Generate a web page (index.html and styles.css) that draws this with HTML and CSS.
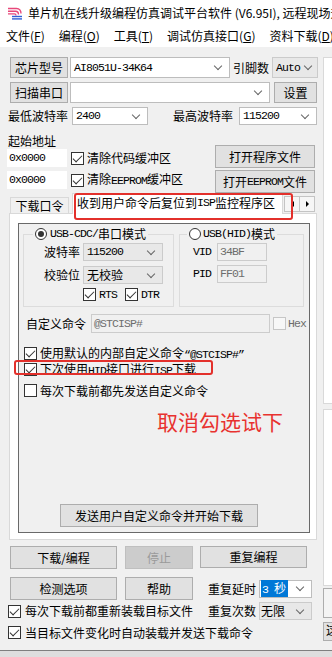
FILE: index.html
```html
<!DOCTYPE html>
<html>
  <head>
    <meta charset="utf-8">
    <title>STC-ISP</title>
    <link rel="stylesheet" href="styles.css">
  </head>
  <body>
    <div class="titlebar">
      <svg class="logo" viewBox="0 0 16 14">
        <path d="M1 2.5h8.5c3 0 4.5 2 4.5 5"/>
        <path d="M1 5.2h7.5c2 0 3 1.3 3 3.3"/>
        <path d="M1 7.9h6.5c1 0 1.5 .6 1.5 1.6"/>
        <rect x="5" y="9.8" width="10" height="1.4"/>
        <rect x="5" y="12.2" width="10" height="1.4"/>
      </svg>
      <span class="title">单片机在线升级编程仿真调试平台软件 (V6.95I), 远程现场升级</span>
    </div>
    <div class="menubar">
      <span>文件(<u>F</u>)</span>
      <span>编程(<u>O</u>)</span>
      <span>工具(<u>T</u>)</span>
      <span>调试仿真接口(<u>G</u>)</span>
      <span>资料下载(<u>D</u>)</span>
    </div>

    <div class="client">
      <div class="main">
        <div class="row r1">
          <div class="btn b-lbl">芯片型号</div>
          <div class="combo c-chip"><span class="m">AI8051U-34K64</span></div>
          <span class="pinlbl">引脚数</span>
          <div class="combo grey c-pin"><span class="m">Auto</span></div>
        </div>
        <div class="row r2">
          <div class="btn b-lbl">扫描串口</div>
          <div class="combo c-port"></div>
          <div class="btn b-set">设置</div>
        </div>
        <div class="row r3">
          <span>最低波特率</span>
          <div class="combo c-min"><span class="m">2400</span></div>
          <span class="maxlbl">最高波特率</span>
          <div class="combo c-max"><span class="m">115200</span></div>
        </div>

        <div class="addr">
          <div class="addr-left">
            <div class="addr-title">起始地址</div>
            <div class="row addr-row">
              <div class="edit"><span class="m">0x0000</span></div>
              <span class="cb on"></span><span class="cbtext">清除代码缓冲区</span>
            </div>
            <div class="row addr-row">
              <div class="edit"><span class="m">0x0000</span></div>
              <span class="cb on"></span><span class="cbtext">清除<span class="m">EEPROM</span>缓冲区</span>
            </div>
          </div>
          <div class="addr-right">
            <div class="btn b-open">打开程序文件</div>
            <div class="btn b-open">打开<span class="m">EEPROM</span>文件</div>
          </div>
        </div>

        <div class="tabs">
          <div class="tab">下载口令</div>
          <div class="tab active">收到用户命令后复位到<span class="m">ISP</span>监控程序区</div>
          <div class="tabarrows"><span class="arr l"></span><span class="arr r"></span></div>
          <div class="mark mark-tab"></div>
        </div>

        <div class="panel">
          <div class="inner">
            <div class="groups">
              <fieldset class="grp cdc">
                <legend><span class="radio on"></span><span class="m">USB-CDC/</span>串口模式</legend>
                <div class="frow">
                  <span class="flbl">波特率</span>
                  <div class="combo grey c-baud"><span class="m">115200</span></div>
                </div>
                <div class="frow frow2">
                  <span class="flbl">校验位</span>
                  <div class="combo grey c-baud">无校验</div>
                </div>
                <div class="cbrow">
                  <span class="cb on"></span><span class="m cbm">RTS</span>
                  <span class="cb on cb-dtr"></span><span class="m cbm">DTR</span>
                </div>
              </fieldset>
              <fieldset class="grp hid">
                <legend><span class="radio"></span><span class="m">USB(HID)</span>模式</legend>
                <div class="frow hrow">
                  <span class="m">VID</span>
                  <div class="edit dis e-id"><span class="m">34BF</span></div>
                </div>
                <div class="frow hrow hrow2">
                  <span class="m">PID</span>
                  <div class="edit dis e-id"><span class="m">FF01</span></div>
                </div>
              </fieldset>
            </div>

            <div class="row cmdrow">
              <span class="cmdlbl">自定义命令</span>
              <div class="edit dis e-cmd"><span class="m">@STCISP#</span></div>
              <span class="cb dis"></span><span class="m hex">Hex</span>
            </div>

            <div class="opt opt1"><span class="cb on"></span><span class="cbtext">使用默认的内部自定义命令<span class="m">“@STCISP#”</span></span></div>
            <div class="opt opt2">
              <span class="cb on"></span><span class="cbtext">下次使用<span class="m">HID</span>接口进行<span class="m">ISP</span>下载</span>
              <div class="mark mark-opt"></div>
            </div>
            <div class="opt opt3"><span class="cb"></span><span class="cbtext">每次下载前都先发送自定义命令</span></div>

            <div class="note">取消勾选试下</div>

            <div class="btn b-send">发送用户自定义命令并开始下载</div>
          </div>
        </div>

        <div class="row brow1">
          <div class="btn b-big">下载/编程</div>
          <div class="btn b-mid off">停止</div>
          <div class="btn b-big b-rep">重复编程</div>
        </div>
        <div class="row brow2">
          <div class="btn b-big">检测选项</div>
          <div class="btn b-mid">帮助</div>
          <span class="replbl">重复延时</span>
          <div class="combo c-rep"><span class="sel"><span class="m">3 </span>秒</span></div>
        </div>
        <div class="row brow3">
          <div class="row bopt"><span class="cb on"></span><span class="cbtext">每次下载前都重新装载目标文件</span></div>
          <span class="replbl2">重复次数</span>
          <div class="combo grey c-rep">无限</div>
        </div>
        <div class="row brow4">
          <span class="cb on"></span><span class="cbtext">当目标文件变化时自动装载并发送下载命令</span>
        </div>
      </div>

      <div class="side">
        <div class="sbox s1"></div>
        <div class="sbox s2"></div>
        <div class="sbtn s3"></div>
        <div class="sbtn s4">这</div>
      </div>
    </div>
  </body>
</html>
```

FILE: styles.css
```css
* {
  box-sizing: border-box;
}

body {
  margin: 0;
  background: #dedede;
  font-family: "Noto Sans CJK SC", sans-serif;
  font-size: 12px;
  line-height: 14px;
  color: #000;
  overflow: hidden;
}

/* narrow latin text (SimSun look) */
.m {
  font-family: "Liberation Mono", monospace;
  font-size: 11.5px;
  letter-spacing: -0.9px;
}

.row {
  display: flex;
  align-items: center;
}
.row > span,
.frow > span {
  flex: none;
  white-space: nowrap;
}

/* title + menu */
.titlebar {
  height: 25px;
  background: #fff;
  display: flex;
  align-items: center;
  padding-left: 7px;
  white-space: nowrap;
  overflow: hidden;
}
.logo {
  width: 16px;
  height: 14px;
  flex: none;
}
.logo path {
  fill: none;
  stroke: #e8477a;
  stroke-width: 1.4;
}
.logo rect {
  fill: #3160d6;
}
.title {
  margin-left: 5px;
}

.menubar {
  height: 22px;
  background: #fff;
  display: flex;
  align-items: center;
  gap: 14px;
  padding-left: 6px;
  white-space: nowrap;
  overflow: hidden;
}
.menubar span {
  flex: none;
}

.client {
  display: flex;
  height: 604px;
  background: #f0f0f0;
  border-bottom: 1px solid #7f7f7f;
}
.main {
  width: 323px;
  flex: none;
  padding-top: 10px;
}

/* controls */
.btn {
  display: flex;
  align-items: center;
  justify-content: center;
  background: #e1e1e1;
  border: 1px solid #adadad;
  flex: none;
  white-space: nowrap;
}
.btn.off {
  background: #cccccc;
  border-color: #bfbfbf;
  color: #9a9a9a;
}

.combo {
  display: flex;
  align-items: center;
  background: #fff;
  border: 1px solid #bdbdbd;
  padding-left: 3px;
  flex: none;
  white-space: nowrap;
}
.combo::after {
  content: "";
  width: 5px;
  height: 5px;
  border-right: 1px solid #666;
  border-bottom: 1px solid #666;
  transform: rotate(45deg);
  margin: -3px 8px 0 auto;
  flex: none;
}
.combo.grey {
  background: #e8e8e8;
  border-color: #cbcbcb;
}

.edit {
  display: flex;
  align-items: center;
  background: #fff;
  padding-left: 2px;
  flex: none;
  white-space: nowrap;
}
.edit.dis {
  background: #f0f0f0;
  border: 1px solid #cccccc;
  color: #6d6d6d;
}

.cb {
  width: 13px;
  height: 13px;
  border: 1px solid #333;
  background: #fff;
  flex: none;
  display: flex;
  align-items: center;
  justify-content: center;
}
.cb.on::after {
  content: "";
  width: 4px;
  height: 8px;
  border-right: 1px solid #333;
  border-bottom: 1px solid #333;
  transform: rotate(45deg);
  margin-top: -2px;
}
.cb.dis {
  border-color: #c6c6c6;
  background: #f7f7f7;
}
.cbtext {
  margin-left: 3px;
  white-space: nowrap;
}

.radio {
  width: 12px;
  height: 12px;
  border: 1px solid #333;
  border-radius: 50%;
  background: #fff;
  display: flex;
  align-items: center;
  justify-content: center;
  margin-right: 3px;
  flex: none;
}
.radio.on::after {
  content: "";
  width: 6px;
  height: 6px;
  border-radius: 50%;
  background: #333;
}

/* top rows */
.r1 {
  height: 21px;
  margin-left: 10px;
}
.b-lbl {
  width: 58px;
  height: 21px;
}
.c-chip {
  width: 160px;
  height: 21px;
  margin-left: 2px;
}
.pinlbl {
  margin-left: 3px;
}
.c-pin {
  width: 46px;
  height: 21px;
  margin-left: 3px;
}
.c-pin::after {
  margin-right: 6px;
}

.r2 {
  height: 21px;
  margin: 4px 0 0 10px;
}
.c-port {
  width: 200px;
  height: 21px;
  margin-left: 2px;
}
.b-set {
  width: 43px;
  height: 21px;
  margin-left: 4px;
}

.r3 {
  height: 18px;
  margin: 4px 0 0 8px;
}
.c-min {
  width: 76px;
  height: 18px;
  margin-left: 4px;
}
.maxlbl {
  margin-left: 25px;
}
.c-max {
  width: 78px;
  height: 18px;
  margin-left: 6px;
}

.addr {
  display: flex;
  margin-top: 8px;
}
.addr-left {
  margin-left: 7px;
}
.addr-title {
  margin-left: 1px;
  height: 15px;
  line-height: 15px;
}
.addr-row {
  height: 18px;
  margin-top: 4px;
}
.addr-title + .addr-row {
  margin-top: 1px;
}
.addr-row .edit {
  width: 60px;
  height: 18px;
}
.addr-row .cb {
  margin-left: 4px;
}
.addr-right {
  margin: 12px 8px 0 auto;
  display: flex;
  flex-direction: column;
  gap: 2px;
}
.b-open {
  width: 100px;
  height: 23px;
}

/* tab strip */
.tabs {
  position: relative;
  display: flex;
  align-items: flex-end;
  height: 20px;
  margin-left: 10px;
}
.tab {
  width: 59px;
  height: 16px;
  margin-right: 3px;
  display: flex;
  align-items: center;
  justify-content: center;
  border: 1px solid #d9d9d9;
  border-bottom: none;
  background: #f0f0f0;
  white-space: nowrap;
}
.tab.active {
  position: relative;
  z-index: 1;
  width: 211px;
  height: 21px;
  margin-right: 0;
  margin-bottom: -1px;
  justify-content: flex-start;
  padding: 0 0 3px 4px;
  background: #fff;
}
.tabarrows {
  display: flex;
  align-self: flex-start;
  margin: 3px 0 0 1px;
}
.arr {
  width: 16px;
  height: 16px;
  border: 1px solid #c4c4c4;
  background: #f6f6f6;
  display: flex;
  align-items: center;
  justify-content: center;
}
.arr + .arr {
  margin-left: -1px;
}
.arr.l::after {
  content: "";
  border-top: 3px solid transparent;
  border-bottom: 3px solid transparent;
  border-right: 3px solid #000;
}
.arr.r::after {
  content: "";
  border-top: 3px solid transparent;
  border-bottom: 3px solid transparent;
  border-left: 3px solid #000;
}

/* red marks drawn over the screenshot */
.mark {
  position: absolute;
  border: 2px solid #e3302b;
  border-radius: 3px;
  z-index: 2;
}
.mark-tab {
  left: 64px;
  top: 0;
  width: 219px;
  height: 27px;
}
.mark-opt {
  left: -10px;
  top: -3px;
  width: 199px;
  height: 15px;
}

.panel {
  margin: 0 0 0 9px;
  width: 308px;
  height: 327px;
  background: #fff;
  border: 1px solid #d9d9d9;
  padding: 9px 6px 6px 8px;
}
.inner {
  height: 100%;
  background: #f0f0f0;
  border: 1px solid #696969;
  padding: 3px 5px 5px 4px;
  display: flex;
  flex-direction: column;
}

.groups {
  display: flex;
  gap: 5px;
}
.grp {
  margin: 0;
  padding: 0 0 5px 0;
  border: 1px solid #dcdcdc;
  min-width: 0;
}
.grp legend {
  display: flex;
  align-items: center;
  height: 14px;
  padding: 0 2px;
  white-space: nowrap;
}
.cdc {
  width: 151px;
}
.cdc legend {
  margin-left: 9px;
}
.hid {
  width: 125px;
}
.hid legend {
  margin-left: 7px;
}
.hid .radio {
  margin-right: 2px;
}

.frow {
  display: flex;
  align-items: center;
  height: 18px;
  margin-top: 2px;
}
.frow2 {
  margin-top: 5px;
}
.flbl {
  width: 56px;
  text-align: right;
}
.c-baud {
  width: 80px;
  height: 18px;
  margin-left: 3px;
}
.cbrow {
  display: flex;
  align-items: center;
  height: 13px;
  margin-top: 4px;
  padding-left: 59px;
}
.cbm {
  margin-left: 3px;
}
.cb-dtr {
  margin-left: 8px;
}
.hrow {
  padding-left: 13px;
}
.hrow2 {
  margin-top: 4px;
}
.e-id {
  width: 50px;
  height: 18px;
  margin-left: 6px;
}

.cmdrow {
  height: 19px;
  margin-top: 7px;
}
.cmdlbl {
  margin-left: 3px;
}
.e-cmd {
  width: 179px;
  height: 19px;
  margin-left: 5px;
}
.cmdrow .cb {
  margin-left: 3px;
}
.hex {
  margin-left: 2px;
  color: #6d6d6d;
}

.opt {
  position: relative;
  display: flex;
  align-items: center;
  height: 13px;
  margin-left: 1px;
}
.opt1 {
  margin-top: 14px;
}
.opt2 {
  margin-top: 3px;
}
.opt3 {
  margin-top: 8px;
}

.note {
  margin-top: 12px;
  padding-left: 134px;
  font-size: 21px;
  line-height: 24px;
  color: #e8322f;
  white-space: nowrap;
}

.b-send {
  width: 198px;
  height: 23px;
  margin: auto 0 0 37px;
}

/* bottom buttons */
.brow1 {
  margin: 6px 0 0 10px;
  height: 23px;
}
.b-big {
  width: 107px;
  height: 23px;
}
.b-mid {
  width: 68px;
  height: 23px;
  margin-left: 8px;
}
.b-rep {
  height: 22px;
  margin-left: 7px;
  align-self: flex-start;
}
.brow2 {
  margin: 8px 0 0 10px;
  height: 23px;
}
.replbl {
  margin-left: 15px;
}
.c-rep {
  width: 53px;
  height: 18px;
  margin-left: 3px;
  padding-left: 1px;
}
.sel {
  background: #0078d7;
  color: #fff;
  line-height: 15px;
  padding: 0 2px 0 1px;
}
.brow3 {
  margin: 2px 0 0 8px;
  height: 18px;
}
.bopt {
  width: 200px;
  flex: none;
}
.bopt .cbtext,
.brow4 .cbtext {
  margin-left: 4px;
}
.brow4 {
  margin: 6px 0 0 8px;
  height: 13px;
}

/* strip of the next pane on the right */
.side {
  flex: 1;
  min-width: 0;
  padding-top: 10px;
  display: flex;
  flex-direction: column;
}
.sbox {
  background: #fff;
  border: 1px solid #d9d9d9;
  border-right: none;
}
.s1 {
  height: 347px;
}
.s2 {
  height: 177px;
  margin-top: 5px;
}
.sbtn {
  background: #e1e1e1;
  border: 1px solid #adadad;
  border-right: none;
  overflow: hidden;
  white-space: nowrap;
  padding-left: 2px;
}
.s3 {
  height: 30px;
  margin-top: 2px;
  background: #f4f4f4;
}
.s4 {
  height: 19px;
  margin-top: 4px;
}
```
